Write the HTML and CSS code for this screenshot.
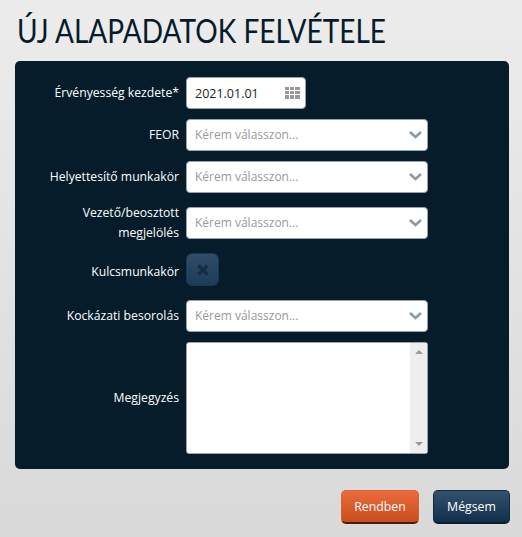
FILE: index.html
```html
<!DOCTYPE html>
<html lang="hu">
<head>
  <meta charset="UTF-8">
  <title>Új alapadatok felvétele</title>
  <link rel="stylesheet" href="styles.css">
</head>
<body>
  <h1 class="page-title">ÚJ ALAPADATOK FELVÉTELE</h1>

  <div class="panel">
    <div class="form-row">
      <label class="form-label">Érvényesség kezdete*</label>
      <div class="field field-date">
        <span class="field-value">2021.01.01</span>
        <svg class="icon-grid" width="15" height="12" viewBox="0 0 15 12">
          <path fill="#999" d="M0 0h4v3H0zM5 0h4v3H5zM10 0h5v3h-5zM0 4h4v3H0zM5 4h4v3H5zM10 4h5v3h-5zM0 8h4v4H0zM5 8h4v4H5zM10 8h5v4h-5z"/>
        </svg>
      </div>
    </div>

    <div class="form-row">
      <label class="form-label">FEOR</label>
      <div class="field field-select">
        <span class="field-placeholder">Kérem válasszon...</span>
        <svg class="icon-chevron" width="13" height="8" viewBox="0 0 13 8">
          <path fill="none" stroke="#8a9aa6" stroke-width="2.6" d="M1 1l5.5 5 5.5-5"/>
        </svg>
      </div>
    </div>

    <div class="form-row">
      <label class="form-label">Helyettesítő munkakör</label>
      <div class="field field-select">
        <span class="field-placeholder">Kérem válasszon...</span>
        <svg class="icon-chevron" width="13" height="8" viewBox="0 0 13 8">
          <path fill="none" stroke="#8a9aa6" stroke-width="2.6" d="M1 1l5.5 5 5.5-5"/>
        </svg>
      </div>
    </div>

    <div class="form-row">
      <label class="form-label">Vezető/beosztott megjelölés</label>
      <div class="field field-select">
        <span class="field-placeholder">Kérem válasszon...</span>
        <svg class="icon-chevron" width="13" height="8" viewBox="0 0 13 8">
          <path fill="none" stroke="#8a9aa6" stroke-width="2.6" d="M1 1l5.5 5 5.5-5"/>
        </svg>
      </div>
    </div>

    <div class="form-row form-row-check">
      <label class="form-label">Kulcsmunkakör</label>
      <div class="check-btn">
        <svg width="12" height="12" viewBox="0 0 12 12">
          <path stroke="#152d42" stroke-width="3.4" d="M1.5 1.5l9 9M10.5 1.5l-9 9"/>
        </svg>
      </div>
    </div>

    <div class="form-row">
      <label class="form-label">Kockázati besorolás</label>
      <div class="field field-select">
        <span class="field-placeholder">Kérem válasszon...</span>
        <svg class="icon-chevron" width="13" height="8" viewBox="0 0 13 8">
          <path fill="none" stroke="#8a9aa6" stroke-width="2.6" d="M1 1l5.5 5 5.5-5"/>
        </svg>
      </div>
    </div>

    <div class="form-row">
      <label class="form-label">Megjegyzés</label>
      <div class="textarea-box">
        <div class="scrollbar">
          <span class="arrow-up"></span>
          <span class="arrow-down"></span>
        </div>
      </div>
    </div>
  </div>

  <div class="actions">
    <button class="btn btn-ok">Rendben</button>
    <button class="btn btn-cancel">Mégsem</button>
  </div>
</body>
</html>
```

FILE: styles.css
```css
* { margin: 0; padding: 0; box-sizing: border-box; }
body {
  font-family: "Open Sans", "Noto Sans", sans-serif;
  font-size: 12.5px;
  height: 537px;
  overflow: hidden;
  background: linear-gradient(to bottom, #ececec, #d9d9d9);
  display: flex;
  flex-direction: column;
}
.page-title {
  font-family: "Lato", sans-serif;
  font-size: 33px;
  font-weight: 400;
  line-height: 38px;
  color: #061c2b;
  padding: 11px 0 0 20px;
  height: 61px;
  white-space: nowrap;
  transform: scaleX(.85);
  transform-origin: 0 0;
}
.panel {
  margin: 0 13px 0 15px;
  height: 408px;
  padding: 16px 0 15px;
  background-color: #061c2b;
  border-radius: 5px;
  display: flex;
  flex-direction: column;
  gap: 10px;
}
.form-row {
  display: flex;
  align-items: center;
  gap: 7px;
}
.form-row-check { height: 37px; }
.form-label {
  width: 164px;
  padding-left: 20px;
  text-align: right;
  color: #fff;
  font-size: 12.2px;
  font-weight: 500;
  line-height: 20px;
}
.field {
  height: 32px;
  background-color: #fff;
  border: 1px solid #9aa3a9;
  border-radius: 4px;
  display: flex;
  align-items: center;
  justify-content: space-between;
  padding: 0 5px 0 8px;
}
.field-date { width: 120px; color: #222; }
.field-select { width: 242px; }
.field-placeholder { color: #999; font-size: 12px; line-height: 16px; padding-bottom: 1px; }
.check-btn {
  align-self: flex-start;
  width: 33px;
  height: 33px;
  border-radius: 6px;
  border: 1px solid #1a3750;
  background: linear-gradient(to bottom, #2f4d68, #1d3c59);
  display: flex;
  align-items: center;
  justify-content: center;
}
.textarea-box {
  width: 242px;
  height: 112px;
  background-color: #fff;
  border: 1px solid #9aa3a9;
  border-radius: 3px;
  display: flex;
  justify-content: flex-end;
}
.scrollbar {
  width: 17px;
  background-color: #eee;
  display: flex;
  flex-direction: column;
  justify-content: space-between;
  align-items: center;
  padding: 7px 0;
}
.arrow-up, .arrow-down {
  width: 0;
  height: 0;
  border-left: 4px solid transparent;
  border-right: 4px solid transparent;
}
.arrow-up { border-bottom: 4px solid #999; }
.arrow-down { border-top: 4px solid #999; }
.actions {
  display: flex;
  justify-content: flex-end;
  gap: 14px;
  padding: 21px 12px 0 0;
}
.btn {
  width: 78px;
  height: 34px;
  font-family: inherit;
  font-size: 12.3px;
  font-weight: 400;
  color: #fff;
  border-radius: 5px;
  cursor: pointer;
}
.btn-ok {
  background: linear-gradient(to bottom, #ea6b3d, #c94d1b);
  border: 1px solid #d9622f;
  border-bottom: 2px solid #4a1c0c;
}
.btn-cancel {
  width: 77px;
  background: linear-gradient(to bottom, #34526c, #112f4b);
  border: 1px solid #0f2a40;
  border-bottom: 2px solid #08202f;
}
```
